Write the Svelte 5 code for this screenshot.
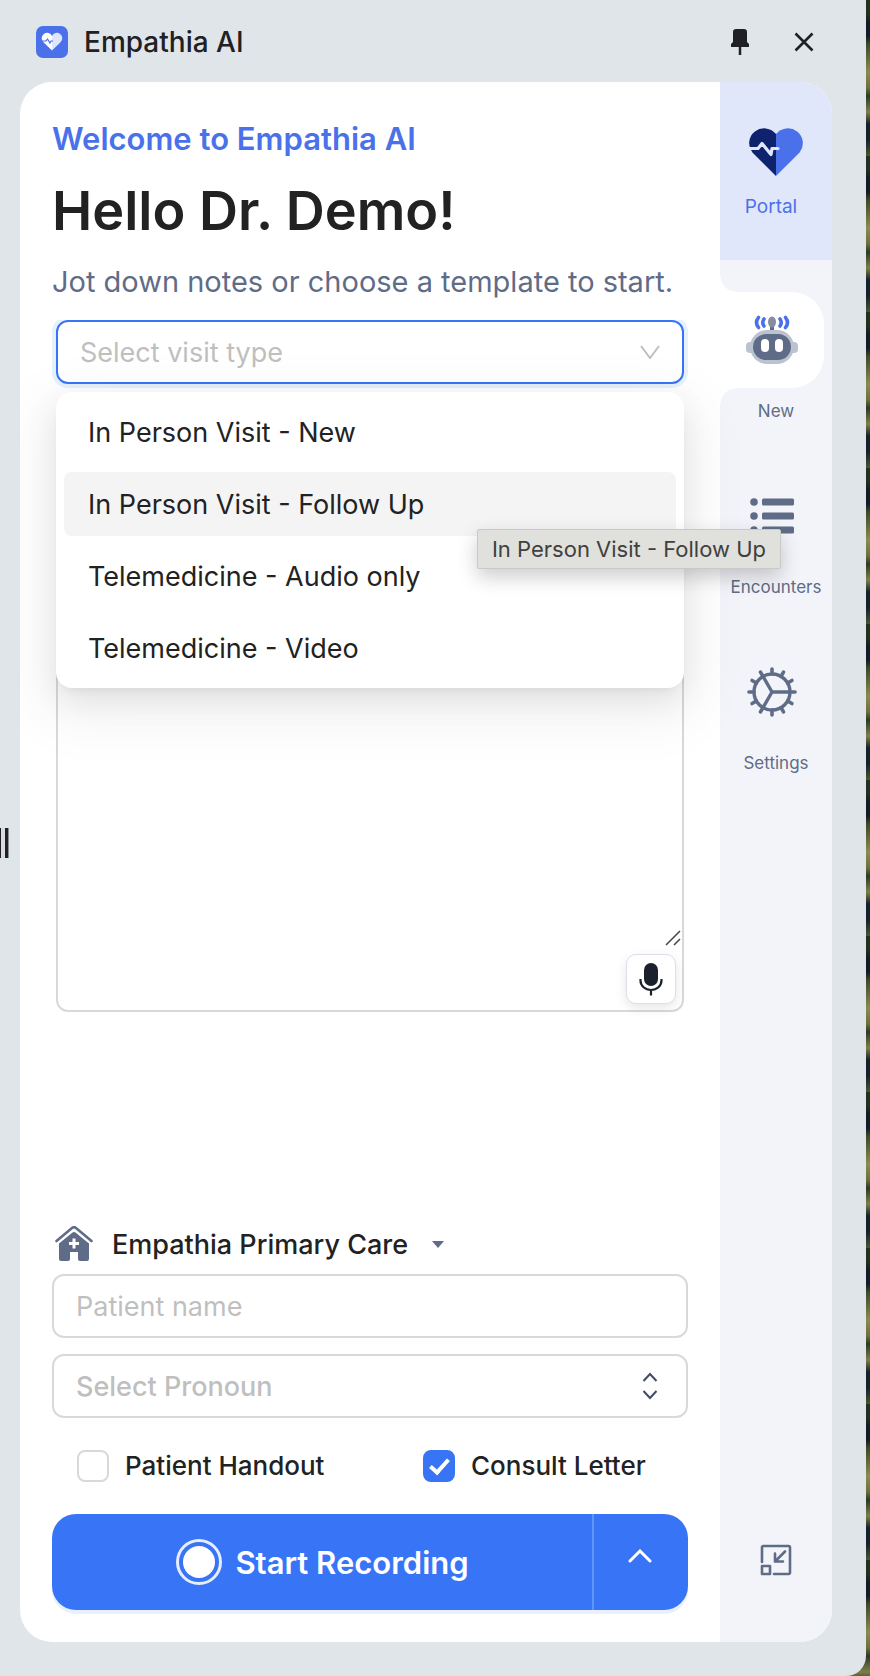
<script>
	let visitType = '';
	let pronoun = '';
	let notes = '';
	let patientName = '';
	let patientHandout = false;
	let consultLetter = true;
	let hovered = 1;

	const visitTypes = [
		'In Person Visit - New',
		'In Person Visit - Follow Up',
		'Telemedicine - Audio only',
		'Telemedicine - Video'
	];
	const gearTeeth = Array.from({ length: 12 }, (_, i) => i * 30);

	function pick(type) {
		visitType = type;
	}
</script>

<div class="desktop">
	<div class="window">
		<header>
			<svg class="logo" viewBox="0 0 32 32" aria-hidden="true">
				<rect width="32" height="32" rx="7" fill="#4b71ea" />
				<path d="M16 10A5.400 5.400 0 1 0 7.500 16.300L16 24.500Z" fill="#fff" />
				<path d="M16 10A5.400 5.400 0 1 1 24.500 16.300L16 24.500Z" fill="#dfe6fc" />
				<path d="M6 15h4l1.500-2 2.500 4 1-2h2" fill="none" stroke="#4b71ea" stroke-width="1.200" />
			</svg>
			<span class="title">Empathia AI</span>
			<button class="plain" aria-label="Pin">
				<svg width="18" height="26" viewBox="0 0 18 26">
					<path d="M2 3q0-3 3-3h8q3 0 3 3v10l2 2v3H0v-3l2-2Z" fill="#202124" />
					<path d="M9 17v9" stroke="#202124" stroke-width="2.500" />
				</svg>
			</button>
			<button class="plain" aria-label="Close">
				<svg width="20" height="20" viewBox="0 0 20 20">
					<path d="m1.500 1.500 17 17m0-17-17 17" stroke="#202124" stroke-width="2.600" />
				</svg>
			</button>
		</header>

		<div class="panel">
			<main>
				<p class="welcome">Welcome to Empathia AI</p>
				<h1>Hello Dr. Demo!</h1>
				<p class="subtitle">Jot down notes or choose a template to start.</p>

				<div class="note-area">
					<div class="visit">
						<select class="field visit-select" class:empty={!visitType} bind:value={visitType} aria-label="Visit type">
							<option value="" disabled>Select visit type</option>
							{#each visitTypes as type}
								<option value={type}>{type}</option>
							{/each}
						</select>
						<svg class="chevron" width="20" height="14" viewBox="0 0 20 14" aria-hidden="true">
							<path d="m1 1 9 12 9-12" fill="none" stroke="#bfbfbf" stroke-width="2" />
						</svg>
						<ul class="menu">
							{#each visitTypes as type, i}
								<li>
									<button class="option" class:hovered={hovered === i} on:mouseenter={() => (hovered = i)} on:click={() => pick(type)}>
										{type}
									</button>
									{#if hovered === i}
										<span class="tooltip" role="tooltip">{type}</span>
									{/if}
								</li>
							{/each}
						</ul>
					</div>

					<div class="notes">
						<textarea bind:value={notes} aria-label="Notes"></textarea>
						<svg class="grip" width="16" height="16" viewBox="0 0 16 16" aria-hidden="true">
							<path d="M1 15 15 1M9 15l6-6" stroke="#444" stroke-width="1.500" />
						</svg>
						<button class="mic" aria-label="Dictate">
							<svg width="24" height="34" viewBox="0 0 24 34">
								<rect x="5" y="1" width="14" height="23" rx="7" fill="#1b212c" />
								<path d="M1.500 17v1.500a10.500 9.500 0 0 0 21 0V17M12 28v5.500" fill="none" stroke="#1b212c" stroke-width="2.200" />
							</svg>
						</button>
					</div>
				</div>

				<div class="footer">
					<button class="clinic">
						<svg width="38" height="36" viewBox="0 0 38 36" aria-hidden="true">
							<path d="M1.500 15 17 2q2-1.500 4 0l15.500 13" fill="none" stroke="#5f6c87" stroke-width="2.600" stroke-linecap="round" />
							<path
								fill-rule="evenodd"
								d="M4 17.500 17.500 6.500q1.500-1 3 0L34 17.500V33q0 2-2 2h-7q-2 0-2-2v-7h-8v7q0 2-2 2H6q-2 0-2-2ZM17.500 12.500v3.500H14v3h3.500v3.500h3V19H24v-3h-3.500v-3.500Z"
								fill="#5f6c87"
							/>
						</svg>
						<span>Empathia Primary Care</span>
						<svg width="12" height="7" viewBox="0 0 12 7" aria-hidden="true">
							<path d="M0 0h12L6 7Z" fill="#5f6c87" />
						</svg>
					</button>

					<input class="field" type="text" placeholder="Patient name" aria-label="Patient name" bind:value={patientName} />

					<div class="pronoun">
						<select class="field" class:empty={!pronoun} bind:value={pronoun} aria-label="Pronoun">
							<option value="" disabled>Select Pronoun</option>
							<option>He/Him</option>
							<option>She/Her</option>
							<option>They/Them</option>
						</select>
						<svg class="updown" width="16" height="28" viewBox="0 0 16 28" aria-hidden="true">
							<path d="m1.500 9 6.500-7 6.500 7M1.500 19l6.500 7 6.500-7" fill="none" stroke="#414a6b" stroke-width="2" />
						</svg>
					</div>

					<div class="checks">
						<label><input type="checkbox" bind:checked={patientHandout} />Patient Handout</label>
						<label><input type="checkbox" bind:checked={consultLetter} />Consult Letter</label>
					</div>

					<div class="record">
						<button class="start">
							<svg width="48" height="48" viewBox="0 0 48 48" aria-hidden="true">
								<circle cx="24" cy="24" r="21.500" fill="none" stroke="#e6eefe" stroke-width="3" />
								<circle cx="24" cy="24" r="16" fill="#fff" />
							</svg>
							Start Recording
						</button>
						<button class="more" aria-label="More recording options">
							<svg width="24" height="14" viewBox="0 0 24 14">
								<path d="m2 12 10-10 10 10" fill="none" stroke="#fff" stroke-width="3" stroke-linecap="round" />
							</svg>
						</button>
					</div>
				</div>
			</main>

			<nav>
				<a href="#portal" class="portal">
					<svg width="56" height="49" viewBox="0 0 56 49" aria-hidden="true">
						<path d="M28 7A15 15 0 1 0 4.400 25.600L28 49Z" fill="#0e226d" />
						<path d="M28 7A15 15 0 1 1 51.600 25.600L28 49Z" fill="#4b71ea" />
						<path d="M0 21.500h10l4-5 9 11 1-6h6" fill="none" stroke="#e0e7fb" stroke-width="3.200" stroke-linecap="round" stroke-linejoin="round" />
					</svg>
					<span>Portal</span>
				</a>
				<a href="#new" class="item active">
					<span class="icon">
						<svg width="54" height="50" viewBox="0 0 54 50" aria-hidden="true">
							<g fill="none" stroke="#4b71ea" stroke-width="3.600" stroke-linecap="round">
								<path d="M13.500 2.500q-4 5 0 10M19 4q-2.500 3.500 0 7M40.500 2.500q4 5 0 10M35 4q2.500 3.500 0 7" />
							</g>
							<path d="M27 8v8" stroke="#5f6c87" stroke-width="4" />
							<ellipse cx="27" cy="7" rx="4" ry="5.500" fill="#858d9f" />
							<rect x="1" y="27" width="52" height="11" rx="4" fill="#bcc3d0" />
							<rect x="5" y="15" width="44" height="34" rx="17" fill="#bcc3d0" />
							<rect x="8" y="19" width="38" height="26" rx="13" fill="#5f6c87" />
							<rect x="16" y="24" width="8" height="13" rx="4" fill="#fff" />
							<rect x="30" y="24" width="8" height="13" rx="4" fill="#fff" />
						</svg>
					</span>
					<span>New</span>
				</a>
				<a href="#encounters" class="item">
					<span class="icon">
						<svg width="44" height="36" viewBox="0 0 44 36" fill="#5f6c87" aria-hidden="true">
							{#each [4, 18, 32] as y}
								<circle cx="4" cy={y} r="3.800" />
								<rect x="12" y={y - 3.5} width="32" height="7" rx="1.500" />
							{/each}
						</svg>
					</span>
					<span>Encounters</span>
				</a>
				<a href="#settings" class="item">
					<span class="icon">
						<svg width="50" height="50" viewBox="-25 -25 50 50" fill="none" stroke="#5f6c87" stroke-width="3.400" aria-hidden="true">
							<circle r="18" />
							<path d="M0 0h18M0 0-9-15.600M0 0-9 15.600" />
							{#each gearTeeth as angle}
								<path d="M18 0h5" stroke-width="3.600" stroke-linecap="round" transform="rotate({angle})" />
							{/each}
						</svg>
					</span>
					<span>Settings</span>
				</a>
				<button class="plain collapse" aria-label="Collapse">
					<svg width="32" height="32" viewBox="0 0 32 32" fill="none" stroke="#5f6c87" stroke-width="2.600" stroke-linecap="round" stroke-linejoin="round">
						<path d="M2 18V3.500Q2 2 3.500 2h25Q30 2 30 3.500v25q0 1.500-1.500 1.500H14M2 22h8v8H2ZM25 7.500 15 17.500M15 9.500v8h8" />
					</svg>
				</button>
			</nav>
		</div>
		<span class="resize-handle"></span>
	</div>
</div>

<style>
	:global(body) {
		margin: 0;
		font-family: Inter, "Liberation Sans", sans-serif;
		color: #222;
	}
	* {
		box-sizing: border-box;
	}
	button, input, select, textarea {
		font: inherit;
		color: inherit;
	}
	button {
		border: 0;
		padding: 0;
		background: none;
		cursor: pointer;
	}
	a {
		text-decoration: none;
	}
	svg {
		display: block;
		flex: none;
	}
	.desktop {
		min-height: 100vh;
		display: flex;
		padding-right: 4px;
		background: repeating-linear-gradient(#22301f 0 14px, #101d26 22px 36px, #3d4828 44px, #8a8b52 72px, #6a6f3c 88px, #2c3a26 96px, #7c7f48 112px, #14222a 124px 140px, #4a5430 156px);
	}
	.window {
		position: relative;
		flex: 1;
		display: flex;
		flex-direction: column;
		padding: 0 34px 34px 20px;
		background: #e0e5e9;
		border-radius: 0 0 20px 0;
	}
	header {
		display: flex;
		align-items: center;
		height: 82px;
		padding: 2px 12px 0 16px;
	}
	.logo {
		width: 32px;
		height: 32px;
	}
	.title {
		flex: 1;
		margin-left: 16px;
		font-size: 28px;
		font-weight: 500;
		line-height: 40px;
		color: #202124;
	}
	.plain {
		display: grid;
		place-items: center;
	}
	header .plain {
		width: 32px;
		height: 40px;
		margin-left: 32px;
	}
	.panel {
		flex: 1;
		display: flex;
		background: #fff;
		border-radius: 32px;
		overflow: hidden;
	}
	main {
		position: relative;
		z-index: 1;
		flex: 1;
		display: flex;
		flex-direction: column;
		padding: 37px 32px 32px;
	}
	.welcome, .subtitle, h1 {
		margin: 0;
	}
	.welcome {
		font-size: 31px;
		line-height: 40px;
		font-weight: 600;
		color: #4b71ea;
	}
	h1 {
		margin: 16px 0 15px;
		font-size: 54px;
		line-height: 72px;
		font-weight: 600;
	}
	.subtitle {
		font-size: 29px;
		line-height: 40px;
		color: #5f6c87;
	}
	.note-area {
		margin: 18px 4px 0;
	}
	.visit, .pronoun {
		position: relative;
	}
	.field {
		display: block;
		width: 100%;
		height: 64px;
		padding: 0 22px;
		border: 2px solid #d9d9d9;
		border-radius: 12px;
		background: #fff;
		font-size: 27px;
		outline: none;
		appearance: none;
	}
	.field::placeholder {
		color: #bfbfbf;
		opacity: 1;
	}
	.empty {
		color: #bfbfbf;
	}
	.pronoun .field {
		font-weight: 500;
	}
	.visit-select {
		border-color: #3875f6;
		box-shadow: 0 0 0 4px #e6f1fd;
		clip-path: inset(0 -4px -4px -4px);
	}
	.chevron, .updown {
		position: absolute;
		top: 50%;
		transform: translateY(-50%);
		pointer-events: none;
	}
	.chevron {
		right: 24px;
	}
	.updown {
		right: 30px;
	}
	.menu {
		position: absolute;
		z-index: 2;
		top: 72px;
		left: 0;
		right: 0;
		display: flex;
		flex-direction: column;
		gap: 8px;
		margin: 0;
		padding: 8px;
		list-style: none;
		background: #fff;
		border-radius: 16px;
		box-shadow: 0 12px 32px 0 rgba(0, 0, 0, .08), 0 6px 12px -8px rgba(0, 0, 0, .12), 0 18px 56px 16px rgba(0, 0, 0, .05);
	}
	.menu li {
		position: relative;
	}
	.option {
		display: block;
		width: 100%;
		height: 64px;
		padding: 0 24px;
		border-radius: 8px;
		font-size: 27px;
		text-align: left;
	}
	.option.hovered {
		background: #f4f4f4;
	}
	.tooltip {
		position: absolute;
		z-index: 3;
		top: 57px;
		right: -105px;
		padding: 0 14px;
		background: #e0e0dd;
		border: 1px solid #c9c9c6;
		border-radius: 2px;
		box-shadow: 0 8px 20px rgba(0, 0, 0, .2);
		font-size: 22px;
		line-height: 38px;
		white-space: nowrap;
		color: #40403e;
	}
	.notes {
		position: relative;
		height: 608px;
		margin-top: 20px;
		border: 2px solid #d9d9d9;
		border-radius: 12px;
	}
	textarea {
		display: block;
		width: 100%;
		height: 540px;
		padding: 16px 22px;
		border: 0;
		border-radius: 12px;
		background: transparent;
		font-size: 27px;
		outline: none;
		resize: none;
	}
	.grip {
		position: absolute;
		right: 1px;
		bottom: 64px;
	}
	.mic {
		position: absolute;
		right: 6px;
		bottom: 6px;
		display: grid;
		place-items: center;
		width: 50px;
		height: 50px;
		border: 1px solid #dcdfea;
		border-radius: 10px;
		background: #fff;
		box-shadow: 0 4px 12px rgba(0, 0, 0, .1);
	}
	.footer {
		margin-top: auto;
	}
	.clinic {
		display: flex;
		align-items: center;
		height: 60px;
		padding: 0 3px;
		font-size: 27px;
		font-weight: 500;
	}
	.clinic span {
		margin: 0 24px 0 19px;
	}
	.pronoun {
		margin-top: 16px;
	}
	.checks {
		display: grid;
		grid-template-columns: 346px 1fr;
		padding: 32px 0 32px 25px;
	}
	.checks label {
		display: flex;
		align-items: center;
		gap: 16px;
		font-size: 26px;
		line-height: 32px;
		font-weight: 500;
		white-space: nowrap;
	}
	.checks input {
		display: grid;
		place-items: center;
		width: 32px;
		height: 32px;
		margin: 0;
		border: 2px solid #d9d9d9;
		border-radius: 8px;
		appearance: none;
	}
	.checks input:checked {
		border-color: #3875f6;
		background: #3875f6;
	}
	.checks input:checked::after {
		content: "";
		width: 7px;
		height: 15px;
		border: solid #fff;
		border-width: 0 4px 4px 0;
		transform: translateY(-2px) rotate(42deg);
	}
	.record {
		display: flex;
		height: 96px;
		border-radius: 24px;
		background: #3875f6;
		box-shadow: 0 4px 0 #e9f1fe;
		color: #fff;
	}
	.start {
		flex: 1;
		display: flex;
		align-items: center;
		justify-content: center;
		gap: 12px;
		font-size: 31px;
		font-weight: 600;
	}
	.more {
		display: grid;
		place-items: center;
		width: 96px;
		padding: 0 2px 12px 0;
		border-left: 2px solid #5f96fa;
	}
	nav {
		display: flex;
		flex-direction: column;
		align-items: center;
		width: 112px;
		background: #f2f4f9;
	}
	nav a {
		display: flex;
		flex-direction: column;
		align-items: center;
		width: 100%;
		font-size: 17px;
		line-height: 24px;
		color: #5f6c87;
	}
	nav .portal {
		height: 178px;
		margin-bottom: 32px;
		padding: 45px 10px 0 0;
		gap: 19px;
		background: #e0e7fb;
		font-size: 19px;
		color: #4b71ea;
	}
	nav .portal svg {
		align-self: flex-end;
		margin-right: 18px;
	}
	.item {
		height: 176px;
	}
	.icon {
		position: relative;
		align-self: flex-start;
		display: grid;
		place-items: center;
		width: 104px;
		height: 96px;
		margin-bottom: 11px;
	}
	.active .icon {
		background: #fff;
		border-radius: 0 32px 32px 0;
	}
	.active .icon::before, .active .icon::after {
		content: "";
		position: absolute;
		left: 0;
		width: 16px;
		height: 16px;
	}
	.active .icon::before {
		top: -16px;
		background: radial-gradient(circle at 100% 0, transparent 15px, #fff 16px);
	}
	.active .icon::after {
		bottom: -16px;
		background: radial-gradient(circle at 100% 100%, transparent 15px, #fff 16px);
	}
	.collapse {
		width: 64px;
		height: 64px;
		margin-top: auto;
		margin-bottom: 50px;
	}
	.resize-handle {
		position: absolute;
		left: 0;
		top: 828px;
		width: 9px;
		height: 30px;
		background: linear-gradient(90deg, #202124 1px, #d9dbde 1px 5px, #202124 5px 8px, #8d8f92 8px);
	}
</style>
